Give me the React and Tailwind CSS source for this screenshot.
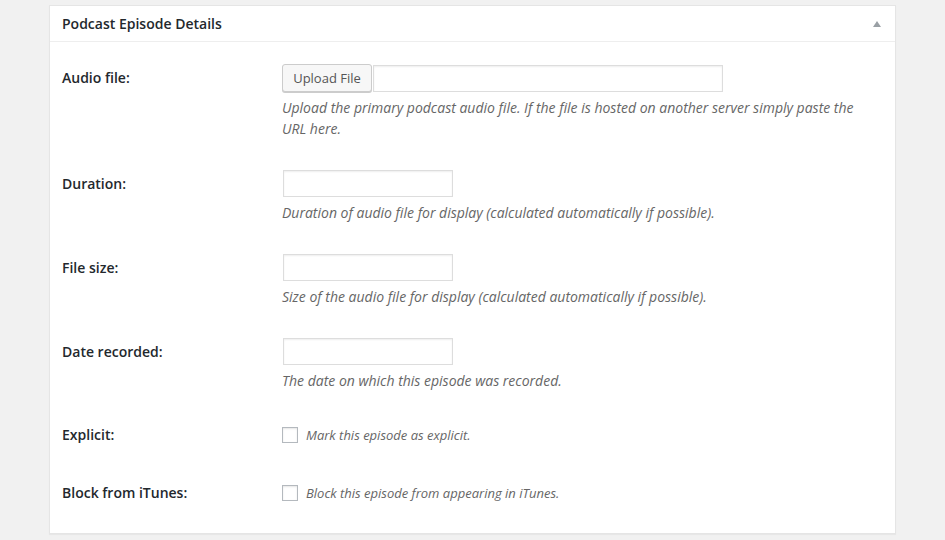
export default function App() {
  const font = { fontFamily: '"Open Sans", "Noto Sans", sans-serif' };
  const labelBase = "w-[220px] shrink-0 text-[14px] font-semibold leading-[20px] text-[#23282d]";
  const label = `${labelBase} pt-[4px]`;
  const desc = "mt-[5px] text-[14px] italic leading-[21px] text-[#666]";
  const input =
    "block h-[27px] bg-white border border-[#ddd] shadow-[inset_0_1px_2px_rgba(0,0,0,0.07)] outline-none";
  const checkbox =
    "mt-[2px] h-[16px] w-[16px] shrink-0 border border-[#b4b9be] bg-white shadow-[inset_0_1px_2px_rgba(0,0,0,0.1)]";

  return (
    <div className="min-h-[540px] w-[945px] bg-[#f1f1f1] pt-[5px] pl-[49px]" style={font}>
      <div className="w-[847px] border border-[#e5e5e5] bg-white shadow-[0_1px_1px_rgba(0,0,0,0.04)]">
        <div className="flex h-[36px] items-center justify-between border-b border-[#eee] pl-[12px] pr-[14px]">
          <span className="text-[14px] font-semibold leading-[20px] text-[#23282d]">Podcast Episode Details</span>
          <svg width="8" height="6" viewBox="0 0 8 6" className="mt-[1px]">
            <polygon points="4,0 8,6 0,6" fill="#9aa0a5" />
          </svg>
        </div>

        <div className="px-[12px] pt-[22px] pb-[30px]">
          {/* Audio file */}
          <div className="flex items-start">
            <div className={label}>Audio file:</div>
            <div className="w-[590px]">
              <div className="flex items-start">
                <button className="h-[28px] w-[90px] rounded-[3px] border border-[#ccc] bg-[#f7f7f7] text-[13px] leading-[26px] text-[#555] shadow-[0_1px_0_#ccc]">
                  Upload File
                </button>
                <input className={`${input} ml-[1px] mt-[1px] w-[350px]`} />
              </div>
              <p className={desc}>
                Upload the primary podcast audio file. If the file is hosted on another server simply paste the URL here.
              </p>
            </div>
          </div>

          {/* Duration */}
          <div className="mt-[31px] flex items-start">
            <div className={label}>Duration:</div>
            <div>
              <input className={`${input} ml-[1px] w-[170px]`} />
              <p className={desc}>Duration of audio file for display (calculated automatically if possible).</p>
            </div>
          </div>

          {/* File size */}
          <div className="mt-[31px] flex items-start">
            <div className={label}>File size:</div>
            <div>
              <input className={`${input} ml-[1px] w-[170px]`} />
              <p className={desc}>Size of the audio file for display (calculated automatically if possible).</p>
            </div>
          </div>

          {/* Date recorded */}
          <div className="mt-[31px] flex items-start">
            <div className={label}>Date recorded:</div>
            <div>
              <input className={`${input} ml-[1px] w-[170px]`} />
              <p className={desc}>The date on which this episode was recorded.</p>
            </div>
          </div>

          {/* Explicit */}
          <div className="mt-[34px] flex items-start">
            <div className={labelBase}>Explicit:</div>
            <div className="flex items-start">
              <span className={checkbox} />
              <span className="ml-[8px] text-[13px] italic leading-[20px] text-[#666]">Mark this episode as explicit.</span>
            </div>
          </div>

          {/* Block */}
          <div className="mt-[38px] flex items-start">
            <div className={labelBase}>Block from iTunes:</div>
            <div className="flex items-start">
              <span className={checkbox} />
              <span className="ml-[8px] text-[13px] italic leading-[20px] text-[#666]">Block this episode from appearing in iTunes.</span>
            </div>
          </div>
        </div>
      </div>
    </div>
  );
}
